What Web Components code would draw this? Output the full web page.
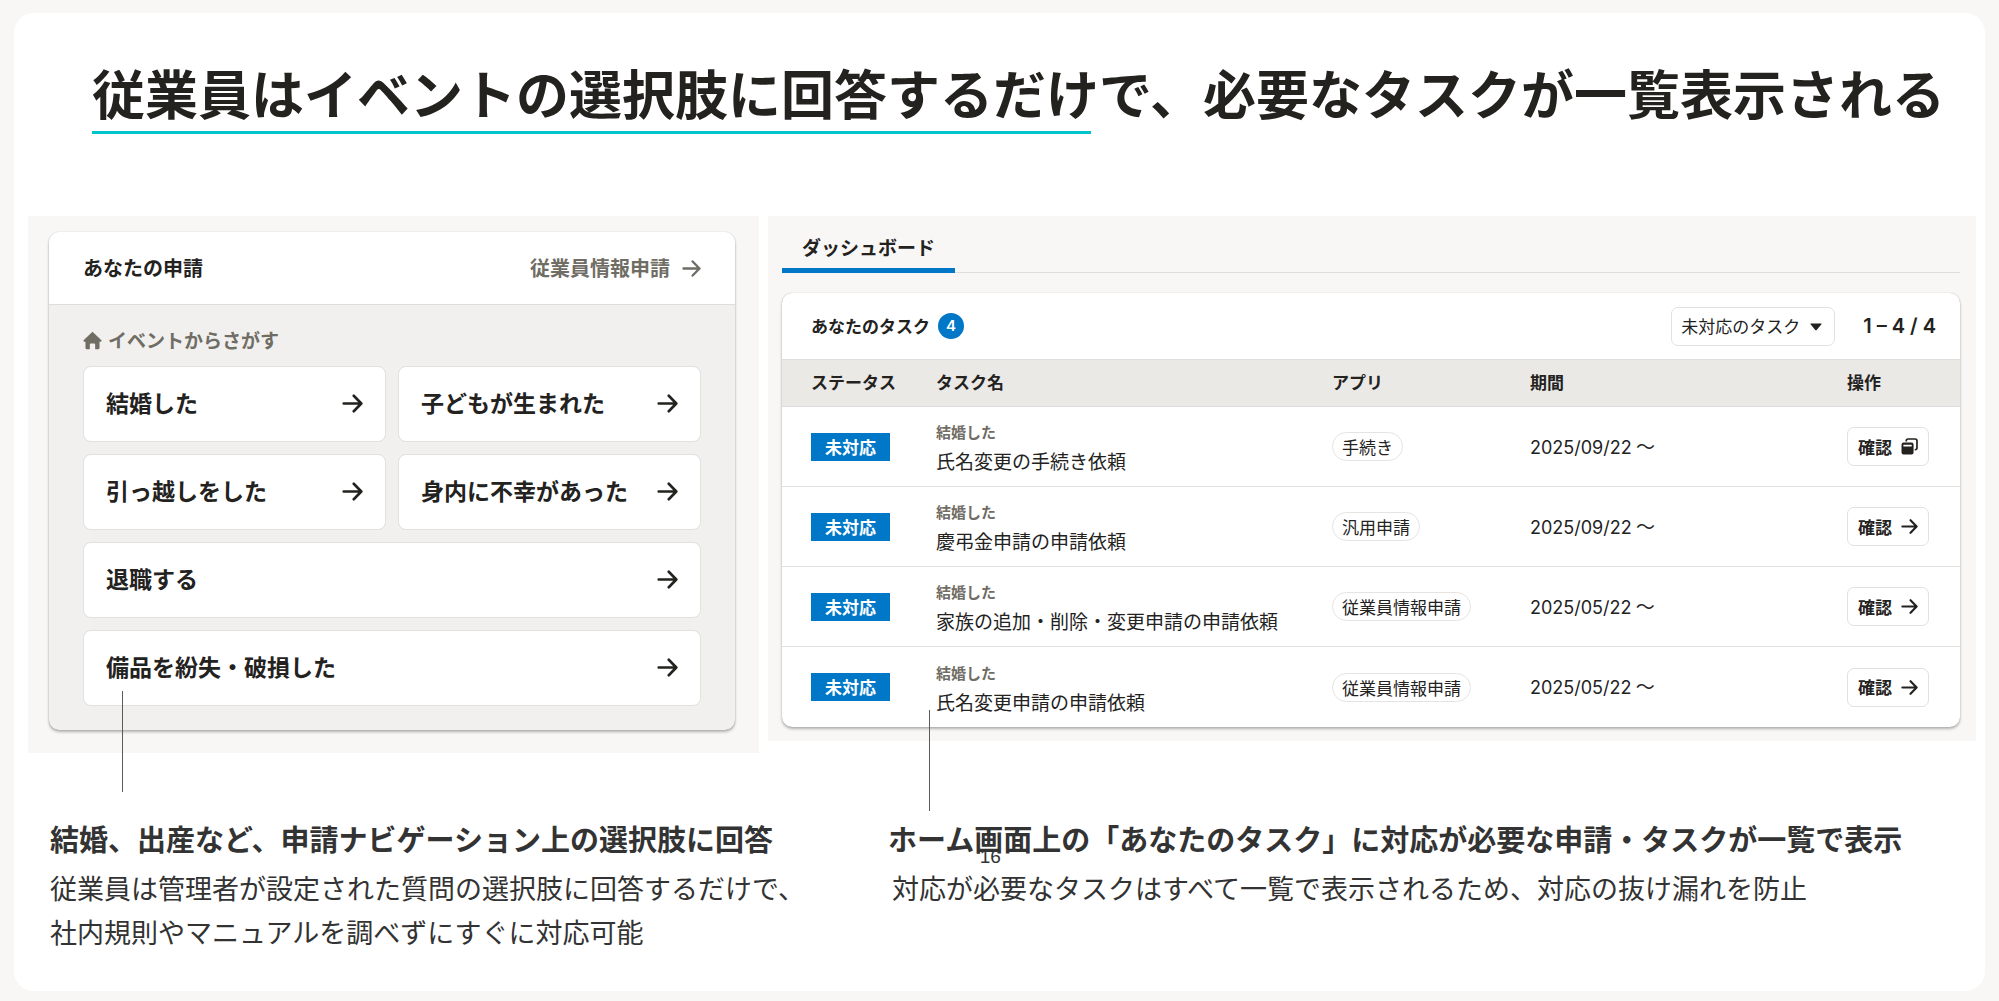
<!DOCTYPE html>
<html lang="ja">
<head>
<meta charset="utf-8">
<title>従業員はイベントの選択肢に回答するだけで、必要なタスクが一覧表示される</title>
<style>
body{margin:0;background:#f8f7f6;color:#23221e;font-family:"Noto Sans CJK JP",sans-serif}
</style>
</head>
<body>
<guide-slide>
  <slide-title slot="title"><span slot="marked">従業員はイベントの選択肢に回答するだけ</span>で、必要なタスクが一覧表示される</slide-title>
  <request-panel slot="left"></request-panel>
  <task-panel slot="right"></task-panel>
  <caption-block slot="caption-left"><span slot="heading">結婚、出産など、申請ナビゲーション上の選択肢に回答</span>従業員は管理者が設定された質問の選択肢に回答するだけで、<br>社内規則やマニュアルを調べずにすぐに対応可能</caption-block>
  <caption-block slot="caption-right" indent><span slot="heading">ホーム画面上の「あなたのタスク」に対応が必要な申請・タスクが一覧で表示</span>対応が必要なタスクはすべて一覧で表示されるため、対応の抜け漏れを防止</caption-block>
  <span slot="page">16</span>
</guide-slide>

<script>
function define(name, html, setup) {
  const template = document.createElement('template');
  template.innerHTML = html;
  customElements.define(name, class extends HTMLElement {
    constructor() {
      super();
      this.attachShadow({mode: 'open'}).append(template.content.cloneNode(true));
    }
    connectedCallback() { if (setup) setup(this, this.shadowRoot); }
  });
}

const icons = {
  arrow: '<path d="M1.6 10H18M11.2 2.6L18.4 10L11.2 17.4" fill="none" stroke="currentColor" stroke-width="2.5" stroke-linecap="round" stroke-linejoin="round"/>',
  house: '<path d="M10 .8 19.4 9.8Q20 11 18.6 11.2H17.4V18Q17.4 19.2 16.2 19.2H12.8V14.2Q12.8 13.2 11.8 13.2H8.2Q7.2 13.2 7.2 14.2V19.2H3.8Q2.6 19.2 2.6 18V11.2H1.4Q0 11 .6 9.8Z" fill="currentColor"/>',
  windows: '<path d="M6.2 4V3.2Q6.2 1.2 8.2 1.2H16.6Q18.8 1.2 18.8 3.4V11.6Q18.8 13.8 16.8 13.8H16.2" fill="none" stroke="currentColor" stroke-width="2"/><path fill-rule="evenodd" d="M3 5.4H12.4Q14.8 5.4 14.8 7.8V17Q14.8 19.4 12.4 19.4H3Q.6 19.4.6 17V7.8Q.6 5.4 3 5.4ZM2.8 8V10H12.6V8Z" fill="currentColor"/>',
  caret: '<path d="M1.5 4H18.5Q20 4 19 5.4L11.2 15Q10 16.2 8.8 15L1 5.4Q0 4 1.5 4Z" fill="currentColor"/>'
};

define('ui-icon', `<style>
:host{display:inline-flex;flex:none;width:var(--size,20px);height:var(--size,20px)}
svg{width:100%;height:100%;display:block}
</style><svg viewBox="0 0 20 20" aria-hidden="true"></svg>`, (el, root) => {
  root.querySelector('svg').innerHTML = icons[el.getAttribute('name')];
});

define('guide-slide', `<style>
:host{display:block;padding:13px 14px 10px}
main{position:relative;box-sizing:border-box;min-height:calc(100vh - 23px);background:#fff;border-radius:20px;padding-bottom:32px}
.panels{display:grid;grid-template-columns:731fr 1208fr;gap:9px;align-items:start;padding:82px 9px 0 14px}
.captions{display:grid;grid-template-columns:838fr 1088fr;padding:61px 9px 0 36px}
.page{position:absolute;left:49%;top:832px;font:19px/24px "Liberation Sans",sans-serif;color:#333}
</style><main>
<slot name="title"></slot>
<section class="panels"><slot name="left"></slot><slot name="right"></slot></section>
<section class="captions"><slot name="caption-left"></slot><slot name="caption-right"></slot></section>
<div class="page"><slot name="page"></slot></div>
</main>`);

define('slide-title', `<style>
:host{display:block;padding:47px 14px 0 78px}
h1{margin:0;font-size:53px;line-height:64px;font-weight:700;white-space:nowrap}
.mark{position:relative;display:inline-block;height:74px}
.mark::after{content:"";position:absolute;left:0;right:8px;bottom:0;height:3px;background:#00c4cc}
</style><h1><span class="mark"><slot name="marked"></slot></span><slot></slot></h1>`);

define('caption-block', `<style>
:host{display:block;color:#333}
h2{margin:0;font-size:29px;line-height:48px;font-weight:700}
p{margin:4px 0 0;font-size:27px;line-height:44px}
:host([indent]) p{padding-left:4px}
</style><h2><slot name="heading"></slot></h2><p><slot></slot></p>`);

define('callout-line', `<style>
:host{position:absolute;width:1px;height:101px;background:#5c5a55}
</style>`);

define('choice-button', `<style>
:host{display:block}
:host([wide]){grid-column:1 / -1}
button{display:flex;align-items:center;justify-content:space-between;box-sizing:border-box;width:100%;height:76px;padding:0 22px 2px;font:700 23px/36px "Noto Sans CJK JP",sans-serif;color:#23221e;background:#fff;border:1px solid #e3e1de;border-radius:8px}
span{padding-bottom:2px}
ui-icon{--size:21px}
</style><button type="button"><span><slot></slot></span><ui-icon name="arrow"></ui-icon></button>`);

define('request-panel', `<style>
:host{display:block;position:relative;background:#f8f7f6;padding:16px 24px 23px 21px}
.card{background:#f1f0ee;border-radius:10px;box-shadow:0 2px 3px rgba(3,3,2,.28),0 0 1px rgba(3,3,2,.3);overflow:hidden}
header{display:flex;align-items:center;justify-content:space-between;box-sizing:border-box;height:73px;padding:0 34px;background:#fff;border-bottom:1px solid #dfdddb}
h2,h3{margin:0;line-height:32px;font-weight:700}
h2{font-size:20px}
a,h3{color:#706d65}
a{display:flex;align-items:center;gap:12px;font-size:20px;line-height:32px;font-weight:700;text-decoration:none}
.body{padding:19px 34px 24px}
h3{display:flex;align-items:center;gap:6px;margin-bottom:10px;font-size:19px}
.grid{display:grid;grid-template-columns:1fr 1fr;gap:12px}
a ui-icon,h3 ui-icon{--size:19px}
callout-line{left:94px;top:475px}
</style><div class="card">
<header><h2>あなたの申請</h2><a href="#requests">従業員情報申請<ui-icon name="arrow"></ui-icon></a></header>
<div class="body"><h3><ui-icon name="house"></ui-icon>イベントからさがす</h3>
<div class="grid">
<choice-button>結婚した</choice-button><choice-button>子どもが生まれた</choice-button>
<choice-button>引っ越しをした</choice-button><choice-button>身内に不幸があった</choice-button>
<choice-button wide>退職する</choice-button><choice-button wide>備品を紛失・破損した</choice-button>
</div></div></div><callout-line></callout-line>`);

define('status-tag', `<style>
:host{display:inline-block;padding:0 14px;background:#0077c7;color:#fff;font-size:17px;line-height:28px;font-weight:700;vertical-align:middle}
</style><slot></slot>`);

define('app-pill', `<style>
:host{display:inline-block;padding:0 9px;border:1px solid #e6e4e1;border-radius:15px;font-size:17px;line-height:27px;vertical-align:middle;white-space:nowrap}
</style><slot></slot>`);

define('confirm-button', `<style>
:host{display:inline-block;vertical-align:middle}
button{display:flex;align-items:center;gap:9px;box-sizing:border-box;height:39px;padding:0 10px;font:700 17px/28px "Noto Sans CJK JP",sans-serif;color:#23221e;background:#fff;border:1px solid #e3e1de;border-radius:7px}
ui-icon{--size:17px}
</style><button type="button"><slot></slot><ui-icon></ui-icon></button>`, (el, root) => {
  const icon = document.createElement('ui-icon');
  icon.setAttribute('name', el.getAttribute('icon'));
  root.querySelector('ui-icon').replaceWith(icon);
});

define('task-filter', `<style>
:host{display:inline-block;position:relative}
select{appearance:none;display:block;box-sizing:border-box;width:164px;height:39px;padding:0 34px 0 9px;font:17px/28px "Noto Sans CJK JP",sans-serif;color:#23221e;background:#fff;border:1px solid #e3e1de;border-radius:7px}
ui-icon{--size:12px;position:absolute;right:13px;top:14px;pointer-events:none}
</style><select aria-label="表示するタスク"><option>未対応のタスク</option></select><ui-icon name="caret"></ui-icon>`);

const tasks = [
  ['氏名変更の手続き依頼', '手続き', '2025/09/22', 'windows'],
  ['慶弔金申請の申請依頼', '汎用申請', '2025/09/22', 'arrow'],
  ['家族の追加・削除・変更申請の申請依頼', '従業員情報申請', '2025/05/22', 'arrow'],
  ['氏名変更申請の申請依頼', '従業員情報申請', '2025/05/22', 'arrow']
];

define('task-table', `<style>
:host{display:block}
table{width:100%;border-collapse:separate;border-spacing:0;table-layout:fixed}
th,td{padding:0;text-align:left;box-sizing:border-box}
th:first-child,td:first-child{padding-left:29px}
th{height:48px;padding-bottom:2px;background:#ebe9e6;border-top:1px solid #dfdddb;border-bottom:1px solid #dfdddb;font-size:17px;line-height:28px;font-weight:700}
td{height:80px;border-bottom:1px solid #e3e1de}
td:nth-child(2){padding-top:3px}
tr:last-child td{border-bottom:0}
.status{width:154px}.app{width:198px}.term{width:317px}.action{width:113px}
small{display:block;font-size:15px;line-height:26px;font-weight:700;color:#706d65}
.name{font-size:19px;line-height:32px}
time{font:18px/28px Inter,"Noto Sans CJK JP",sans-serif}
.date{font-size:19px;line-height:28px}
</style><table>
<colgroup><col class="status"><col><col class="app"><col class="term"><col class="action"></colgroup>
<thead><tr><th>ステータス</th><th>タスク名</th><th>アプリ</th><th>期間</th><th>操作</th></tr></thead>
<tbody>${tasks.map(([name, app, date, icon]) => `<tr><td><status-tag>未対応</status-tag></td><td><small>結婚した</small><div class="name">${name}</div></td><td><app-pill>${app}</app-pill></td><td class="date"><time>${date}</time> 〜</td><td><confirm-button icon="${icon}">確認</confirm-button></td></tr>`).join('')}</tbody>
</table>`);

define('task-panel', `<style>
:host{display:block;position:relative;background:#f8f7f6;padding:0 16px 14px 14px}
.tabs{display:flex;box-sizing:border-box;height:57px;border-bottom:1px solid #dfdddb}
.tabs button{box-sizing:border-box;height:57px;padding:10px 20px 0;font:700 19px/30px "Noto Sans CJK JP",sans-serif;color:#23221e;background:none;border:0;border-bottom:5px solid #0077c7}
.card{margin-top:20px;background:#fff;border-radius:10px;box-shadow:0 2px 3px rgba(3,3,2,.28),0 0 1px rgba(3,3,2,.3);overflow:hidden}
header{display:flex;align-items:center;height:66px;padding:0 24px 0 29px}
h2{margin:0;font-size:17px;line-height:28px;font-weight:700}
.count{width:26px;height:26px;margin-left:8px;border-radius:50%;background:#0077c7;color:#fff;font:600 15px/26px Inter,sans-serif;text-align:center}
task-filter{margin-left:auto}
.range{margin-left:28px;font:600 20px/28px Inter,sans-serif}
callout-line{left:161px;top:494px}
</style><div class="tabs" role="tablist"><button type="button" role="tab" aria-selected="true">ダッシュボード</button></div>
<div class="card"><header><h2>あなたのタスク</h2><span class="count">4</span><task-filter></task-filter><span class="range">1 – 4 / 4</span></header>
<task-table></task-table></div><callout-line></callout-line>`);
</script>
</body>
</html>
